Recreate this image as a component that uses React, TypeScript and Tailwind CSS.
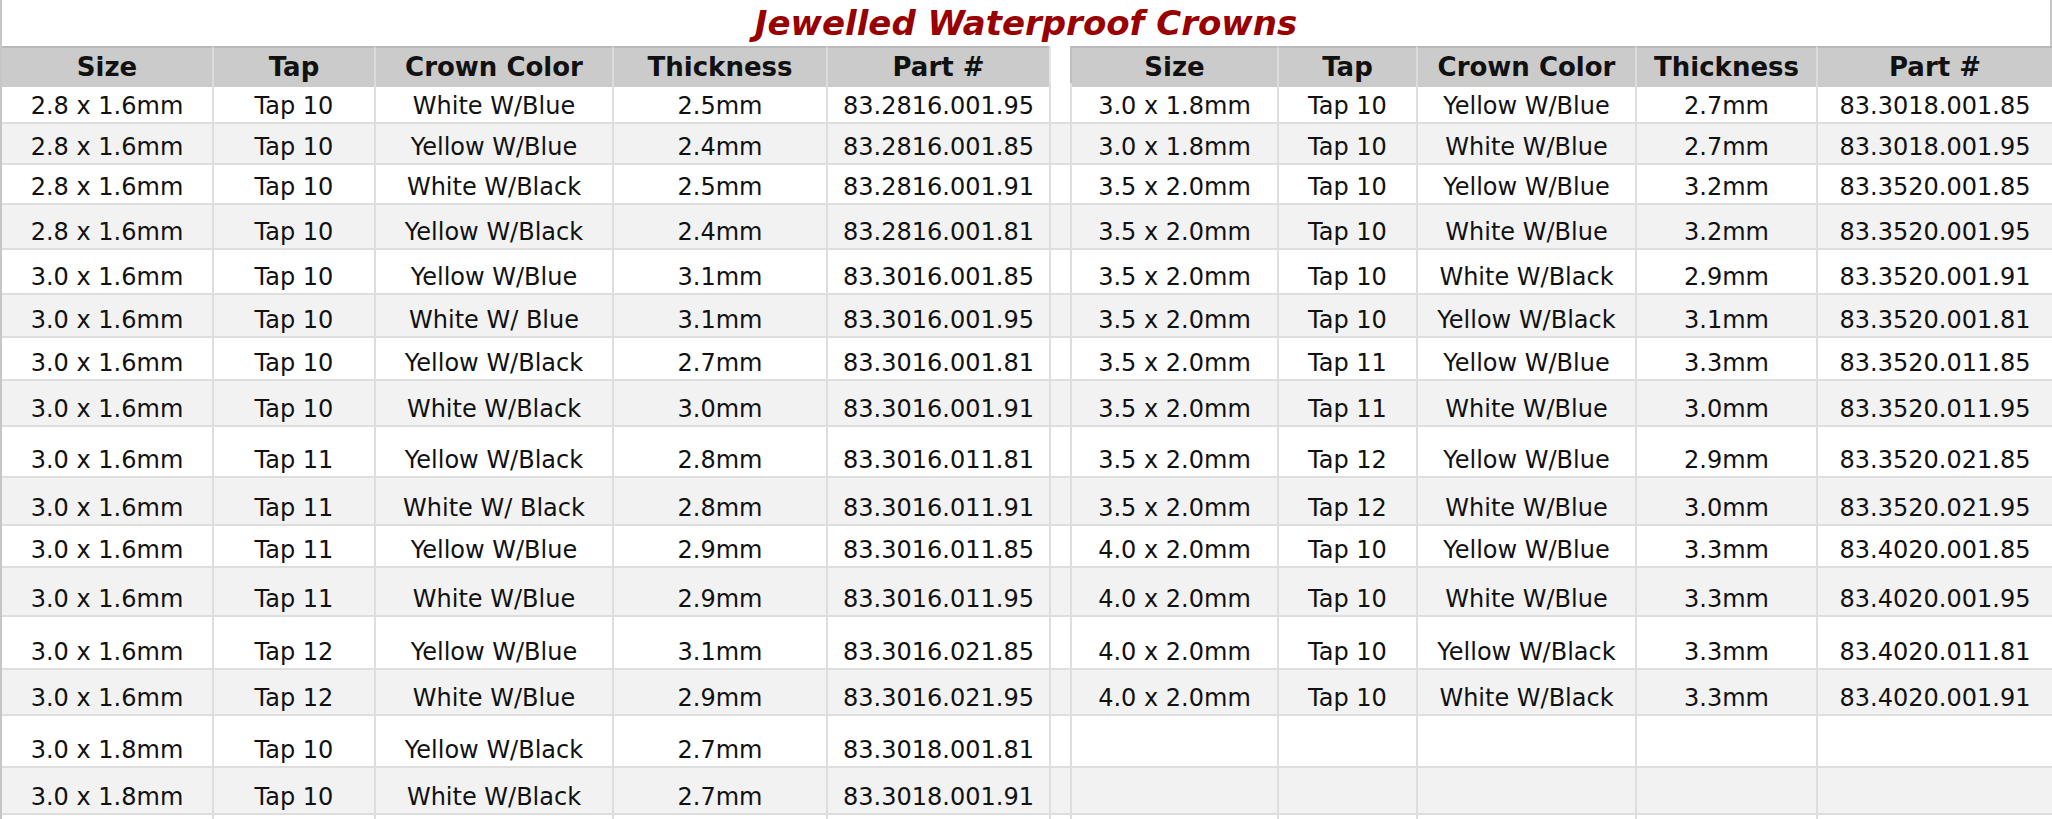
const COLS =
  "grid grid-cols-[210px_162px_238px_214px_223px_21px_207px_139px_219px_181px_1fr]";

type Item = [string, string, string, string, string];

const left: Item[] = [
  ["2.8 x 1.6mm", "Tap 10", "White W/Blue", "2.5mm", "83.2816.001.95"],
  ["2.8 x 1.6mm", "Tap 10", "Yellow W/Blue", "2.4mm", "83.2816.001.85"],
  ["2.8 x 1.6mm", "Tap 10", "White W/Black", "2.5mm", "83.2816.001.91"],
  ["2.8 x 1.6mm", "Tap 10", "Yellow W/Black", "2.4mm", "83.2816.001.81"],
  ["3.0 x 1.6mm", "Tap 10", "Yellow W/Blue", "3.1mm", "83.3016.001.85"],
  ["3.0 x 1.6mm", "Tap 10", "White W/ Blue", "3.1mm", "83.3016.001.95"],
  ["3.0 x 1.6mm", "Tap 10", "Yellow W/Black", "2.7mm", "83.3016.001.81"],
  ["3.0 x 1.6mm", "Tap 10", "White W/Black", "3.0mm", "83.3016.001.91"],
  ["3.0 x 1.6mm", "Tap 11", "Yellow W/Black", "2.8mm", "83.3016.011.81"],
  ["3.0 x 1.6mm", "Tap 11", "White W/ Black", "2.8mm", "83.3016.011.91"],
  ["3.0 x 1.6mm", "Tap 11", "Yellow W/Blue", "2.9mm", "83.3016.011.85"],
  ["3.0 x 1.6mm", "Tap 11", "White W/Blue", "2.9mm", "83.3016.011.95"],
  ["3.0 x 1.6mm", "Tap 12", "Yellow W/Blue", "3.1mm", "83.3016.021.85"],
  ["3.0 x 1.6mm", "Tap 12", "White W/Blue", "2.9mm", "83.3016.021.95"],
  ["3.0 x 1.8mm", "Tap 10", "Yellow W/Black", "2.7mm", "83.3018.001.81"],
  ["3.0 x 1.8mm", "Tap 10", "White W/Black", "2.7mm", "83.3018.001.91"],
];

const right: (Item | null)[] = [
  ["3.0 x 1.8mm", "Tap 10", "Yellow W/Blue", "2.7mm", "83.3018.001.85"],
  ["3.0 x 1.8mm", "Tap 10", "White W/Blue", "2.7mm", "83.3018.001.95"],
  ["3.5 x 2.0mm", "Tap 10", "Yellow W/Blue", "3.2mm", "83.3520.001.85"],
  ["3.5 x 2.0mm", "Tap 10", "White W/Blue", "3.2mm", "83.3520.001.95"],
  ["3.5 x 2.0mm", "Tap 10", "White W/Black", "2.9mm", "83.3520.001.91"],
  ["3.5 x 2.0mm", "Tap 10", "Yellow W/Black", "3.1mm", "83.3520.001.81"],
  ["3.5 x 2.0mm", "Tap 11", "Yellow W/Blue", "3.3mm", "83.3520.011.85"],
  ["3.5 x 2.0mm", "Tap 11", "White W/Blue", "3.0mm", "83.3520.011.95"],
  ["3.5 x 2.0mm", "Tap 12", "Yellow W/Blue", "2.9mm", "83.3520.021.85"],
  ["3.5 x 2.0mm", "Tap 12", "White W/Blue", "3.0mm", "83.3520.021.95"],
  ["4.0 x 2.0mm", "Tap 10", "Yellow W/Blue", "3.3mm", "83.4020.001.85"],
  ["4.0 x 2.0mm", "Tap 10", "White W/Blue", "3.3mm", "83.4020.001.95"],
  ["4.0 x 2.0mm", "Tap 10", "Yellow W/Black", "3.3mm", "83.4020.011.81"],
  ["4.0 x 2.0mm", "Tap 10", "White W/Black", "3.3mm", "83.4020.001.91"],
  null,
  null,
];

// row heights measured off the sheet, border included
const heights = [
  "h-[41px]", "h-[41px]", "h-[40px]", "h-[45px]", "h-[45px]", "h-[43px]",
  "h-[43px]", "h-[46px]", "h-[51px]", "h-[48px]", "h-[42px]", "h-[49px]",
  "h-[53px]", "h-[46px]", "h-[52px]", "h-[47px]", "h-[46px]",
];

const headers = ["Size", "Tap", "Crown Color", "Thickness", "Part #"];

function Cell({ text, first }: { text?: string; first?: boolean }) {
  return (
    <div
      className={`flex items-end justify-center pb-[2px] leading-[28px] whitespace-nowrap ${
        first ? "" : "border-l-2 border-[#dedede]"
      }`}
    >
      {text}
    </div>
  );
}

export default function App() {
  return (
    <div className="w-[2052px] h-[819px] overflow-hidden bg-white border-l-2 border-[#c6c6c6] font-['DejaVu_Sans',Verdana,sans-serif] text-[24px] text-[#111]">
      {/* Titulo */}
      <div className="h-[46px] border-r-2 border-[#c6c6c6] text-center leading-[46px] text-[34px] font-bold italic text-[#990000]">
        Jewelled Waterproof Crowns
      </div>

      {/* Cabecera */}
      <div className={`${COLS} h-[37px] text-[26px] font-bold`}>
        {headers.map((h, i) => (
          <div
            key={"l" + h}
            className={`flex items-center justify-center bg-[#cbcbcb] border-t-2 border-t-[#b9b9b9] ${
              i ? "border-l-2 border-l-[#dcdcdc]" : ""
            }`}
          >
            {h}
          </div>
        ))}
        <div className="bg-white border-l-2 border-l-[#e6e6e6]" />
        {headers.map((h, i) => (
          <div
            key={"r" + h}
            className={`flex items-center justify-center bg-[#cbcbcb] border-t-2 border-t-[#b9b9b9] border-l-2 ${
              i ? "border-l-[#dcdcdc]" : "border-l-[#bdbdbd]"
            }`}
          >
            {h}
          </div>
        ))}
      </div>

      {/* Filas */}
      {heights.map((h, i) => {
        const l = left[i];
        const r = right[i];
        return (
          <div
            key={i}
            className={`${COLS} ${h} border-b-2 border-[#dedede] ${
              i % 2 ? "bg-[#f2f2f2]" : "bg-white"
            }`}
          >
            {[0, 1, 2, 3, 4].map((k) => (
              <Cell key={"l" + k} text={l?.[k]} first={k === 0} />
            ))}
            <Cell />
            {[0, 1, 2, 3, 4].map((k) => (
              <Cell key={"r" + k} text={r?.[k]} />
            ))}
          </div>
        );
      })}
    </div>
  );
}
